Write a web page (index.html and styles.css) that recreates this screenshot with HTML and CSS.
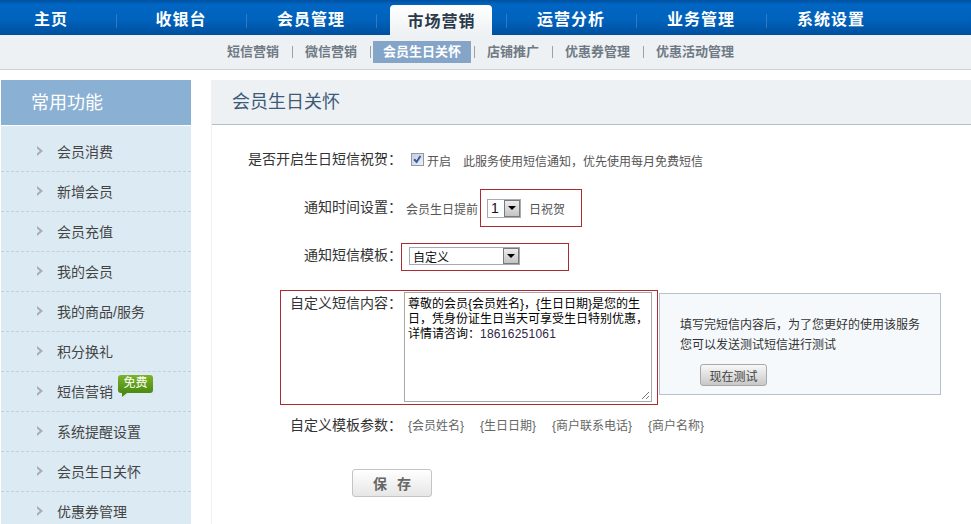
FILE: index.html
```html
<!DOCTYPE html>
<html lang="zh-CN">
<head>
<meta charset="utf-8">
<title>会员生日关怀</title>
<link rel="stylesheet" href="styles.css">
</head>
<body>
<nav class="topnav">
  <a class="tab">主页</a>
  <a class="tab">收银台</a>
  <a class="tab">会员管理</a>
  <a class="tab tab-active"><span>市场营销</span></a>
  <a class="tab">运营分析</a>
  <a class="tab">业务管理</a>
  <a class="tab">系统设置</a>
</nav>
<nav class="subnav">
  <a class="sub">短信营销</a><i class="sep"></i>
  <a class="sub">微信营销</a><i class="sep"></i>
  <a class="sub sub-active">会员生日关怀</a><i class="sep"></i>
  <a class="sub">店铺推广</a><i class="sep"></i>
  <a class="sub">优惠券管理</a><i class="sep"></i>
  <a class="sub">优惠活动管理</a>
</nav>
<div class="page">
  <aside class="sidebar">
    <h2 class="side-title">常用功能</h2>
    <ul class="side-list">
      <li class="side-item"><svg class="chev" viewBox="0 0 8 10"><path d="M1 0 L7 5 L1 10 L1 7.4 L3.8 5 L1 2.6 Z"/></svg>会员消费</li>
      <li class="side-item"><svg class="chev" viewBox="0 0 8 10"><path d="M1 0 L7 5 L1 10 L1 7.4 L3.8 5 L1 2.6 Z"/></svg>新增会员</li>
      <li class="side-item"><svg class="chev" viewBox="0 0 8 10"><path d="M1 0 L7 5 L1 10 L1 7.4 L3.8 5 L1 2.6 Z"/></svg>会员充值</li>
      <li class="side-item"><svg class="chev" viewBox="0 0 8 10"><path d="M1 0 L7 5 L1 10 L1 7.4 L3.8 5 L1 2.6 Z"/></svg>我的会员</li>
      <li class="side-item"><svg class="chev" viewBox="0 0 8 10"><path d="M1 0 L7 5 L1 10 L1 7.4 L3.8 5 L1 2.6 Z"/></svg>我的商品/服务</li>
      <li class="side-item"><svg class="chev" viewBox="0 0 8 10"><path d="M1 0 L7 5 L1 10 L1 7.4 L3.8 5 L1 2.6 Z"/></svg>积分换礼</li>
      <li class="side-item"><svg class="chev" viewBox="0 0 8 10"><path d="M1 0 L7 5 L1 10 L1 7.4 L3.8 5 L1 2.6 Z"/></svg>短信营销<span class="badge">免费</span></li>
      <li class="side-item"><svg class="chev" viewBox="0 0 8 10"><path d="M1 0 L7 5 L1 10 L1 7.4 L3.8 5 L1 2.6 Z"/></svg>系统提醒设置</li>
      <li class="side-item"><svg class="chev" viewBox="0 0 8 10"><path d="M1 0 L7 5 L1 10 L1 7.4 L3.8 5 L1 2.6 Z"/></svg>会员生日关怀</li>
      <li class="side-item"><svg class="chev" viewBox="0 0 8 10"><path d="M1 0 L7 5 L1 10 L1 7.4 L3.8 5 L1 2.6 Z"/></svg>优惠券管理</li>
    </ul>
  </aside>
  <main class="panel">
    <h1 class="panel-title">会员生日关怀</h1>
    <div class="form">
      <div class="row">
        <label class="lbl">是否开启生日短信祝贺：</label>
        <div class="val">
          <span class="check"><svg viewBox="0 0 13 13"><path d="M2.5 6.2 L5.4 9.4 L10 2.4" fill="none" stroke="#3a5aa8" stroke-width="2.4"/></svg></span>
          <span class="check-text">开启</span>
          <span class="hint">此服务使用短信通知，优先使用每月免费短信</span>
        </div>
      </div>
      <div class="row">
        <label class="lbl">通知时间设置：</label>
        <div class="val">
          <span>会员生日提前</span>
          <span class="select select-num"><span class="select-text num">1</span><span class="arrow"></span></span>
          <span>日祝贺</span>
        </div>
      </div>
      <div class="row">
        <label class="lbl">通知短信模板：</label>
        <div class="val">
          <span class="select select-tpl"><span class="select-text">自定义</span><span class="arrow"></span></span>
        </div>
      </div>
      <div class="row row-content">
        <label class="lbl">自定义短信内容：</label>
        <div class="textarea">
          <div>尊敬的会员{会员姓名}，{生日日期}是您的生日，凭身份证生日当天可享受生日特别优惠，</div>
          <div>详情请咨询：<span class="phone">18616251061</span></div>
          <svg class="grip" viewBox="0 0 10 10"><path d="M9 2 L2 9 M9 6 L6 9" fill="none" stroke="#777" stroke-width="1"/></svg>
        </div>
        <div class="info">
          <p>填写完短信内容后，为了您更好的使用该服务<br>您可以发送测试短信进行测试</p>
          <button class="test-btn">现在测试</button>
        </div>
      </div>
      <div class="row row-params">
        <label class="lbl">自定义模板参数：</label>
        <div class="params"><span>{会员姓名}</span><span>{生日日期}</span><span>{商户联系电话}</span><span>{商户名称}</span></div>
      </div>
      <button class="save">保 存</button>
      <div class="mark mark-time"></div>
      <div class="mark mark-tpl"></div>
      <div class="mark mark-content"></div>
    </div>
  </main>
</div>
</body>
</html>
```
FILE: styles.css
```css
* { box-sizing: border-box; }
html, body { margin: 0; padding: 0; }
body {
  width: 971px;
  height: 524px;
  overflow: hidden;
  background: #fff;
  color: #333;
  font-family: "Liberation Sans", "Noto Sans CJK SC", sans-serif;
  font-size: 12px;
}
.topnav {
  display: flex;
  height: 35px;
  margin-left: -14px;
  background: linear-gradient(#00509f 0, #0066c4 5px, #0062bb 20px, #004f9e 35px);
}
.tab {
  width: 130px;
  height: 35px;
  line-height: 40px;
  text-align: center;
  color: #fff;
  font-size: 16px;
  font-weight: 700;
  letter-spacing: 1px;
  background: linear-gradient(#2f7ac4, #2f7ac4) no-repeat left 14px / 1px 14px;
}
.tab-active { padding-top: 5px; }
.tab-active span {
  display: block;
  width: 102px;
  height: 30px;
  margin: 0 auto;
  padding-left: 1px;
  line-height: 33px;
  color: #2a3a4a;
  background: linear-gradient(#fff, #eef1f4);
  border-radius: 4px 4px 0 0;
}
.subnav {
  display: flex;
  align-items: center;
  height: 35px;
  padding: 0 0 0 217px;
  background: #eef1f4;
  border-bottom: 1px solid #cfd3d6;
}
.sub {
  padding: 0 10px;
  height: 22px;
  line-height: 22px;
  font-size: 13px;
  font-weight: 700;
  color: #6f7a84;
}
.sub-active { background: #84a5c7; color: #fff; }
.sep { width: 1px; height: 12px; margin: 0 2px 0 3px; background: #9aa3ab; }
.page {
  display: flex;
  padding: 10px 0 0 1px;
}
.sidebar { width: 190px; flex: none; }
.side-title {
  margin: 0 0 1px;
  height: 45px;
  padding-left: 30px;
  line-height: 47px;
  font-size: 18px;
  font-weight: 400;
  color: #fff;
  background: #8ab0d4;
}
.side-list {
  margin: 0;
  padding: 6px 0 0;
  list-style: none;
  background: #dceaf3;
}
.side-item {
  position: relative;
  display: flex;
  align-items: center;
  height: 40px;
  padding: 0 0 2px 35px;
  font-size: 14px;
  color: #444;
  border-bottom: 1px dashed #c2d0da;
}
.chev { width: 8px; height: 10px; margin-right: 13px; fill: #a9adb0; }
.badge {
  position: absolute;
  left: 117px;
  top: 3px;
  width: 35px;
  height: 18px;
  line-height: 17px;
  text-align: center;
  font-size: 12px;
  color: #fff;
  background: linear-gradient(#7cb32a, #4a8a10);
  border-radius: 3px;
}
.badge::after {
  content: "";
  position: absolute;
  left: 4px;
  top: 18px;
  border-top: 4px solid #4a8a10;
  border-right: 5px solid transparent;
}
.panel {
  flex: 1;
  margin-left: 20px;
  height: 444px;
  border-left: 1px solid #edf1f4;
}
.panel-title {
  margin: 0;
  height: 45px;
  padding-left: 20px;
  line-height: 45px;
  font-size: 18px;
  font-weight: 400;
  color: #3d5a78;
  background: #edf1f4;
  border-bottom: 1px solid #b5bfc6;
}
.form { position: relative; padding-top: 11px; }
.row { display: flex; align-items: center; height: 48px; }
.lbl {
  flex: none;
  width: 190px;
  margin-bottom: 4px;
  text-align: right;
  font-size: 14px;
  color: #333;
}
.val { display: flex; align-items: center; padding-left: 4px; color: #555; }
.check {
  width: 13px;
  height: 13px;
  margin: 0 3px 2px 5px;
  border: 1px solid #8d9aa8;
  background: linear-gradient(135deg, #c6ceda, #eef1f5);
}
.check svg { display: block; width: 11px; height: 11px; }
.check-text { margin-right: 12px; }
.select {
  display: flex;
  align-items: center;
  justify-content: space-between;
  height: 19px;
  padding: 0 0 0 1px;
  background: #fff;
  border: 1px solid #a5abb0;
  color: #111;
}
.select-text { padding-left: 2px; }
.num { font-size: 14px; }
.select-num { width: 34px; margin: 0 8px 0 9px; }
.select-tpl { width: 111px; height: 18px; margin: 0 0 0 3px; }
.arrow {
  display: flex;
  align-items: center;
  justify-content: center;
  width: 16px;
  height: 17px;
  background: linear-gradient(#ececec, #c4c4c4);
  border: 1px solid #7a7a7a;
}
.select-tpl .arrow { height: 16px; }
.arrow::before {
  content: "";
  border-top: 4px solid #000;
  border-left: 4px solid transparent;
  border-right: 4px solid transparent;
}
.row-content {
  align-items: flex-start;
  height: 112px;
  margin-top: 12px;
}
.row-content .lbl { margin-bottom: 0; line-height: 22px; }
.textarea {
  position: relative;
  flex: none;
  width: 248px;
  height: 110px;
  margin-left: 2px;
  padding: 4px 3px;
  line-height: 15px;
  color: #000;
  background: #fff;
  border: 1px solid #a8a8a8;
}
.phone { letter-spacing: .25px; color: #2e2448; }
.grip { position: absolute; right: 1px; bottom: 1px; width: 10px; height: 10px; }
.info {
  flex: none;
  width: 282px;
  height: 102px;
  margin: 1px 0 0 7px;
  padding: 21px 0 0 20px;
  background: #f5f9fc;
  border: 1px solid #b4c3cf;
  color: #333;
}
.info p { margin: 0 0 9px; line-height: 20px; }
.test-btn {
  display: block;
  width: 67px;
  height: 22px;
  margin-left: 20px;
  padding: 0;
  font: inherit;
  color: #444;
  background: linear-gradient(#f8f8f8, #c8c8c8);
  border: 1px solid #a8a8a8;
  border-radius: 3px;
}
.row-params { height: 24px; margin-top: 9px; }
.row-params .lbl { margin-bottom: 2px; }
.params { display: flex; gap: 14px; margin-bottom: 2px; padding-left: 5px; color: #666; }
.params span { padding: 0 1px; }
.save {
  display: block;
  width: 80px;
  height: 28px;
  margin: 32px 0 0 140px;
  padding: 0 0 0 3px;
  font: inherit;
  font-size: 14px;
  font-weight: 700;
  letter-spacing: 3px;
  color: #666;
  background: linear-gradient(#fff, #e6e6e6);
  border: 1px solid #c4c4c4;
  border-radius: 3px;
}
.mark { position: absolute; border: 1px solid #ac2b33; }
.mark-time { left: 268px; top: 64px; width: 102px; height: 38px; }
.mark-tpl { left: 189px; top: 118px; width: 168px; height: 28px; }
.mark-content { left: 68px; top: 165px; width: 378px; height: 115px; }
```
